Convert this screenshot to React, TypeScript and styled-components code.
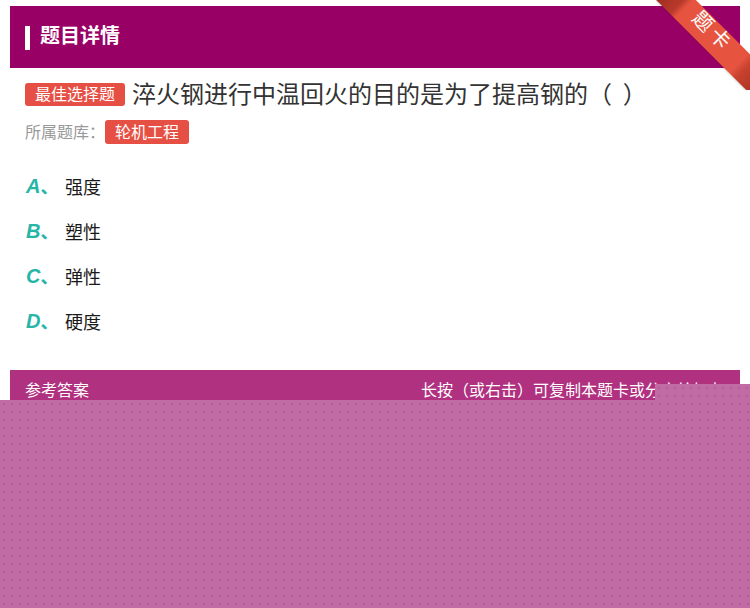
import React from "react";
import styled, { createGlobalStyle } from "styled-components";

const Global = createGlobalStyle`
  html, body { margin: 0; padding: 0; background: #fff; }
  body {
    font-family: "Noto Sans CJK SC", "Liberation Sans", sans-serif;
    position: relative;
    width: 750px;
    height: 608px;
    overflow: hidden;
  }
`;

const Page = styled.div`
  padding: 6px 10px 0;
`;

const Header = styled.div`
  height: 62px;
  background: #990066;
  display: flex;
  align-items: center;
  padding-left: 15px;
  gap: 10px;
`;

const HeaderMark = styled.span`
  width: 5px;
  height: 24px;
  background: #fff;
  margin-top: 2px;
`;

const HeaderTitle = styled.h1`
  margin: -4px 0 0;
  font-size: 20px;
  font-weight: 700;
  color: #fff;
  line-height: 1;
`;

const Body = styled.div`
  padding: 12px 15px 0;
`;

const QuestionRow = styled.div`
  display: flex;
  align-items: center;
  gap: 7px;
  height: 28px;
`;

const Tag = styled.span<{ $h: number }>`
  display: inline-flex;
  align-items: center;
  justify-content: center;
  height: ${(p) => p.$h}px;
  padding: 0 10px 3px;
  background: #e64f44;
  color: #fff;
  font-size: 16px;
  border-radius: 3px;
  line-height: 1;
  box-sizing: border-box;
`;

const QuestionText = styled.span`
  font-size: 24px;
  color: #333;
  line-height: 1;
  margin-top: -3px;
`;

const BankRow = styled.div`
  display: flex;
  align-items: center;
  margin-top: 12px;
  height: 24px;
`;

const BankLabel = styled.span`
  font-size: 16px;
  color: #999;
  line-height: 1;
  margin-top: -3px;
`;

const Options = styled.ul`
  list-style: none;
  margin: 27px 0 0;
  padding: 0;
  display: flex;
  flex-direction: column;
  gap: 15px;
`;

const Option = styled.li`
  display: flex;
  align-items: center;
  height: 30px;
`;

const Letter = styled.span`
  width: 39px;
  font-family: "Liberation Sans", "Noto Sans CJK SC", sans-serif;
  font-size: 20px;
  font-weight: 700;
  font-style: italic;
  color: #27b5a8;
  padding-left: 1px;
  margin-top: -2px;
`;

const Sep = styled.span`
  font-family: "Noto Sans CJK SC", sans-serif;
  font-style: normal;
  font-size: 18px;
`;

const OptionText = styled.span`
  font-size: 18px;
  color: #1a1a1a;
`;

const AnswerBar = styled.div`
  margin-top: 34px;
  height: 44px;
  background: #b0317f;
  display: flex;
  justify-content: space-between;
  align-items: flex-start;
  padding: 7px 15px 0;
  box-sizing: border-box;
  color: #fff;
  font-size: 16px;
`;

const RibbonClip = styled.div`
  position: absolute;
  top: 0;
  right: 0;
  width: 94px;
  height: 90px;
  overflow: hidden;
`;

const RibbonBand = styled.div`
  position: absolute;
  left: -11px;
  top: 25px;
  width: 140px;
  height: 28px;
  transform: rotate(45deg);
  background: linear-gradient(
    to right,
    #9f2e22 0px,
    #b8392b 20px,
    #e6543f 27px,
    #e6543f 104px,
    #c8422f 112px,
    #a3301f 140px
  );
  display: flex;
  align-items: center;
  justify-content: center;
  box-shadow: 0 1px 2px rgba(0, 0, 0, 0.15);
`;

const RibbonText = styled.span`
  color: #fff;
  font-size: 20px;
  letter-spacing: 4px;
  line-height: 1;
  transform: translate(-7px, -5px);
`;

const Overlay = styled.div`
  position: absolute;
  background-color: #c06ba4;
  background-image: radial-gradient(circle, rgba(150, 60, 120, 0.3) 0.9px, transparent 1.3px);
  background-size: 8px 8px;
`;

const OverlayCorner = styled(Overlay)`
  left: 655px;
  top: 384px;
  right: 0;
  height: 16px;
`;

const OverlayMain = styled(Overlay)`
  left: 0;
  top: 400px;
  right: 0;
  bottom: 0;
`;

const options = [
  { k: "A", t: "强度" },
  { k: "B", t: "塑性" },
  { k: "C", t: "弹性" },
  { k: "D", t: "硬度" },
];

export default function App() {
  return (
    <>
      <Global />
      <Page>
        <Header>
          <HeaderMark />
          <HeaderTitle>题目详情</HeaderTitle>
        </Header>
        <Body>
          <QuestionRow>
            <Tag $h={23}>最佳选择题</Tag>
            <QuestionText>淬火钢进行中温回火的目的是为了提高钢的（{"\u00a0\u00a0"}）</QuestionText>
          </QuestionRow>
          <BankRow>
            <BankLabel>所属题库：</BankLabel>
            <Tag $h={24}>轮机工程</Tag>
          </BankRow>
          <Options>
            {options.map((o) => (
              <Option key={o.k}>
                <Letter>
                  {o.k}
                  <Sep>、</Sep>
                </Letter>
                <OptionText>{o.t}</OptionText>
              </Option>
            ))}
          </Options>
        </Body>
        <AnswerBar>
          <span>参考答案</span>
          <span>长按（或右击）可复制本题卡或分享给好友</span>
        </AnswerBar>
      </Page>
      <RibbonClip>
        <RibbonBand>
          <RibbonText>题卡</RibbonText>
        </RibbonBand>
      </RibbonClip>
      <OverlayCorner />
      <OverlayMain />
    </>
  );
}
